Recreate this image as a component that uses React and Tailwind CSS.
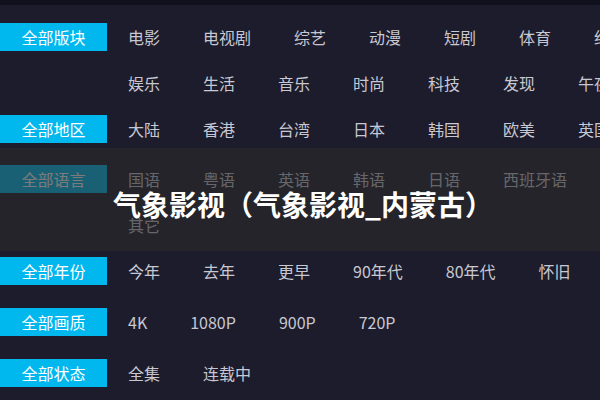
import React from 'react';

const groups = [
  { label: '全部版块', items: ['电影', '电视剧', '综艺', '动漫', '短剧', '体育', '纪录', '娱乐', '生活', '音乐', '时尚', '科技', '发现', '午夜'] },
  { label: '全部地区', items: ['大陆', '香港', '台湾', '日本', '韩国', '欧美', '英国'] },
  { label: '全部语言', items: ['国语', '粤语', '英语', '韩语', '日语', '西班牙语', '其它'], cls: 'mt-[4px]' },
  { label: '全部年份', items: ['今年', '去年', '更早', '90年代', '80年代', '怀旧'] },
  { label: '全部画质', items: ['4K', '1080P', '900P', '720P'], cls: 'mt-[5px]' },
  { label: '全部状态', items: ['全集', '连载中'], cls: 'mt-[5px]' },
];

function Group({ label, items, cls = '' }) {
  return (
    <div className={`flex items-start ${cls}`}>
      {/* label box */}
      <div className="h-[46px] w-[107px] shrink-0 flex items-center">
        <div className="w-full h-[28px] bg-[#00b7ee] text-white text-[16px] flex items-center justify-center">
          {label}
        </div>
      </div>
      <div className="ml-[21px] w-[505px] shrink-0 flex flex-wrap gap-x-[43px]">
        {items.map((it) => (
          <span key={it} className="h-[46px] leading-[46px] text-[16px] text-[#c8c8d2] whitespace-nowrap">
            {it}
          </span>
        ))}
      </div>
    </div>
  );
}

export default function App() {
  return (
    <div
      className="relative w-[600px] h-[400px] overflow-hidden bg-[#1c1c2c]"
      style={{ fontFamily: '"Noto Sans CJK SC", "Noto Sans", sans-serif' }}
    >
      <div className="h-[5px] bg-[#11111d]" />
      <div className="pt-[9px]">
        {groups.map((g) => (
          <Group key={g.label} {...g} />
        ))}
      </div>

      {/* title overlay */}
      <div className="absolute left-0 right-0 top-[148px] h-[103px] bg-[rgba(42,42,42,0.62)] flex items-center pl-[113px] pt-[9px]">
        <h1 className="text-white text-[28px] font-bold leading-none whitespace-nowrap">
          气象影视（气象影视_内蒙古）
        </h1>
      </div>
    </div>
  );
}
